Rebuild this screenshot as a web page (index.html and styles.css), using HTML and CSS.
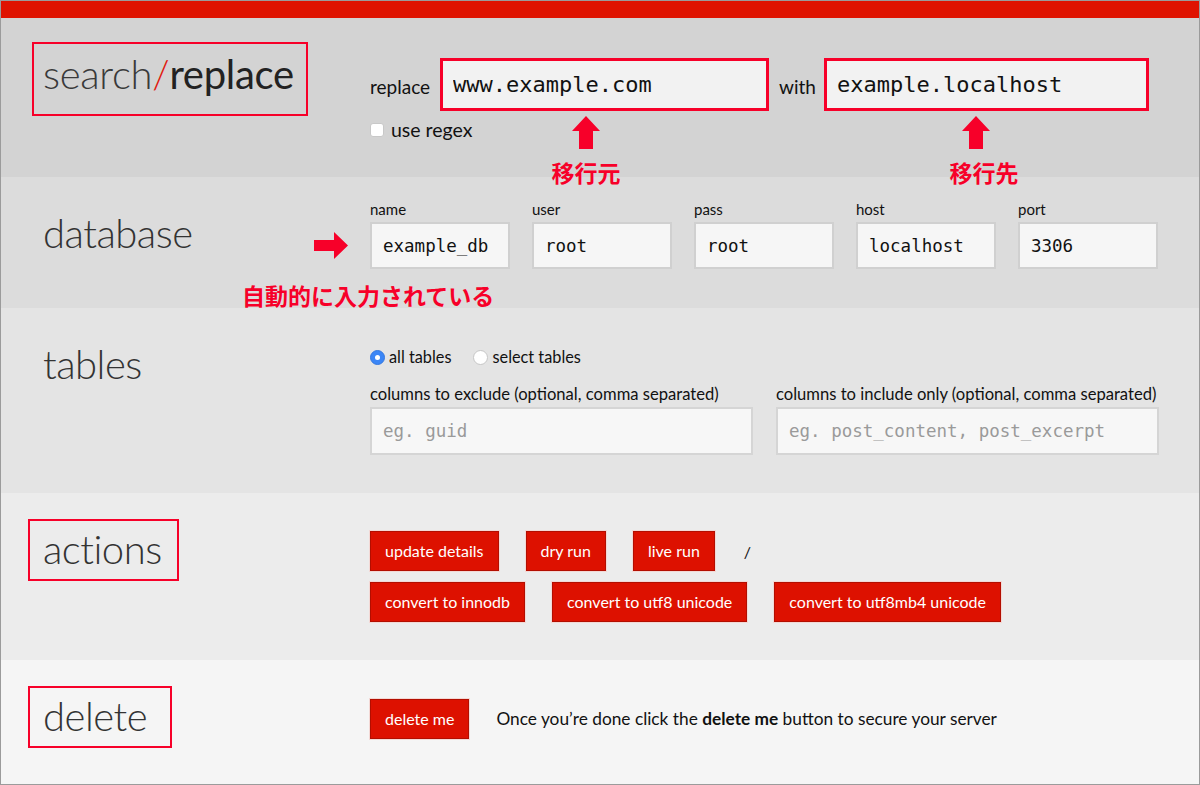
FILE: index.html
```html
<!DOCTYPE html>
<html lang="en">
<head>
<meta charset="utf-8">
<title>search/replace</title>
<link rel="stylesheet" href="styles.css">
</head>
<body>
<div class="frame">
  <div class="topbar"></div>

  <section class="sec sec-search">
    <div class="sec-head">
      <h1 class="heading boxed heading-search"><span class="h-light">search</span><span class="h-slash">/</span><span class="h-strong">replace</span></h1>
    </div>
    <div class="sec-body body-search">
      <div class="replace-row">
        <label class="lbl lbl-replace">replace</label>
        <input class="field-big" type="text" value="www.example.com">
        <label class="lbl lbl-with">with</label>
        <input class="field-big field-with" type="text" value="example.localhost">
      </div>
      <label class="check-row"><input class="check" type="checkbox"><span>use regex</span></label>
    </div>
    <div class="note note-from">
      <svg class="arrow-up" width="28" height="33" viewBox="0 0 28 33"><polygon points="14,0 28,15 21,15 21,33 7,33 7,15 0,15" fill="#f70029"/></svg>
      <span class="note-text">移行元</span>
    </div>
    <div class="note note-to">
      <svg class="arrow-up" width="28" height="33" viewBox="0 0 28 33"><polygon points="14,0 28,15 21,15 21,33 7,33 7,15 0,15" fill="#f70029"/></svg>
      <span class="note-text note-text-shift">移行先</span>
    </div>
  </section>

  <section class="sec sec-db">
    <div class="sec-head">
      <h2 class="heading">database</h2>
    </div>
    <div class="sec-body body-db">
      <div class="db-fields">
        <div class="db-field"><label class="small-lbl">name</label><input class="field-db" type="text" value="example_db"></div>
        <div class="db-field"><label class="small-lbl">user</label><input class="field-db" type="text" value="root"></div>
        <div class="db-field"><label class="small-lbl">pass</label><input class="field-db" type="text" value="root"></div>
        <div class="db-field"><label class="small-lbl">host</label><input class="field-db" type="text" value="localhost"></div>
        <div class="db-field"><label class="small-lbl">port</label><input class="field-db" type="text" value="3306"></div>
      </div>
    </div>
    <svg class="arrow-right" width="34" height="27" viewBox="0 0 34 27"><polygon points="0,8 20,8 20,0 34,13.5 20,27 20,19 0,19" fill="#f70029"/></svg>
    <div class="note-auto">自動的に入力されている</div>
  </section>

  <section class="sec sec-tables">
    <div class="sec-head">
      <h2 class="heading">tables</h2>
    </div>
    <div class="sec-body body-tables">
      <div class="radio-row">
        <label class="radio-opt"><input class="radio" type="radio" name="tables" checked><span>all tables</span></label>
        <label class="radio-opt"><input class="radio" type="radio" name="tables"><span>select tables</span></label>
      </div>
      <div class="col-row">
        <div class="col">
          <label class="col-lbl">columns to exclude (optional, comma separated)</label>
          <input class="field-col" type="text" placeholder="eg. guid">
        </div>
        <div class="col">
          <label class="col-lbl">columns to include only (optional, comma separated)</label>
          <input class="field-col" type="text" placeholder="eg. post_content, post_excerpt">
        </div>
      </div>
    </div>
  </section>

  <section class="sec sec-actions">
    <div class="sec-head">
      <h2 class="heading boxed">actions</h2>
    </div>
    <div class="sec-body body-actions">
      <div class="btn-row">
        <button class="btn">update details</button>
        <button class="btn">dry run</button>
        <button class="btn">live run</button>
        <span class="sep">/</span>
      </div>
      <div class="btn-row btn-row-2">
        <button class="btn">convert to innodb</button>
        <button class="btn">convert to utf8 unicode</button>
        <button class="btn">convert to utf8mb4 unicode</button>
      </div>
    </div>
  </section>

  <section class="sec sec-delete">
    <div class="sec-head">
      <h2 class="heading boxed heading-delete">delete</h2>
    </div>
    <div class="sec-body body-delete">
      <button class="btn">delete me</button>
      <p class="delete-text">Once you’re done click the <strong>delete me</strong> button to secure your server</p>
    </div>
  </section>
</div>
</body>
</html>
```

FILE: styles.css
```css
* { box-sizing: border-box; }

body {
  margin: 0;
  background: #ffffff;
  font-family: "Lato", "Noto Sans CJK JP", sans-serif;
  color: #111;
}

.frame {
  width: 1200px;
  height: 785px;
  border: 1px solid #9b9b9b;
  overflow: hidden;
  background: #f5f5f5;
}

.topbar {
  height: 17px;
  background: #df1300;
}

.sec {
  position: relative;
  display: flex;
}

.sec-search { height: 159px; background: #d3d3d3; }
.sec-db { height: 131px; background: #dcdcdc; }
.sec-tables { height: 185px; background: #e4e4e4; }
.sec-actions { height: 167px; background: #ececec; }
.sec-delete { height: 124px; background: #f5f5f5; }

.sec-head {
  width: 369px;
  flex: none;
}

.sec-body {
  flex: 1;
}

/* headings */
.heading {
  display: inline-block;
  margin: 26px 0 0 27px;
  padding: 4px 15px 6px 13px;
  border: 2px solid transparent;
  font-size: 40px;
  line-height: 48px;
  font-weight: 300;
  letter-spacing: -0.5px;
  color: #333;
  white-space: nowrap;
}

.boxed { border-color: #f70029; }

.heading-search {
  margin: 24px 0 0 31px;
  padding: 6px 12px 16px 9px;
  letter-spacing: -0.3px;
}

.heading-delete { padding-right: 23px; }

.h-light { font-weight: 300; color: #3a3a3a; }
.h-slash { font-weight: 300; color: #e01a10; }
.h-strong { font-weight: 400; color: #222; }

/* search / replace */
.body-search { padding-top: 40px; }

.replace-row {
  display: flex;
  align-items: center;
}

.lbl {
  font-size: 19px;
  line-height: 24px;
  padding-top: 4px;
  color: #111;
}

.lbl-replace { margin-right: 10px; }
.lbl-with { margin: 0 8px 0 10px; }

.field-big {
  width: 329px;
  height: 53px;
  border: 3px solid #f70029;
  background: #f2f2f2;
  font-family: "DejaVu Sans Mono", monospace;
  font-size: 22px;
  padding: 0 10px;
  color: #111;
  outline: none;
}

.field-with { width: 325px; }

.check-row {
  display: flex;
  align-items: center;
  gap: 7px;
  margin-top: 7px;
  font-size: 19.5px;
  line-height: 24px;
}

.check {
  appearance: none;
  -webkit-appearance: none;
  width: 14px;
  height: 14px;
  margin: 0;
  background: #fff;
  border: 1px solid #c8c8c8;
  border-radius: 3px;
}

/* annotations */
.note {
  position: absolute;
  z-index: 2;
  width: 100px;
  display: flex;
  flex-direction: column;
  align-items: center;
  top: 98px;
}

.note-from { left: 535px; }
.note-to { left: 925px; }

.arrow-up { display: block; }

.note-text {
  margin-top: 12px;
  font-family: "Noto Sans CJK JP", sans-serif;
  font-weight: 700;
  font-size: 23px;
  line-height: 23px;
  color: #f70029;
  white-space: nowrap;
}

.note-text-shift { margin-left: 16px; }

.arrow-right {
  position: absolute;
  z-index: 2;
  left: 313px;
  top: 55px;
}

.note-auto {
  position: absolute;
  z-index: 2;
  left: 241px;
  top: 107px;
  font-family: "Noto Sans CJK JP", sans-serif;
  font-weight: 700;
  font-size: 23px;
  line-height: 23px;
  color: #f70029;
  white-space: nowrap;
}

/* database */
.body-db { padding-top: 23px; }

.db-fields {
  display: flex;
  gap: 22px;
}

.db-field {
  display: flex;
  flex-direction: column;
  width: 140px;
}

.small-lbl {
  font-size: 15px;
  line-height: 18px;
  margin-bottom: 4px;
  color: #111;
}

.field-db {
  width: 140px;
  height: 47px;
  border: 2px solid #d0d0d0;
  background: #f6f6f6;
  font-family: "DejaVu Sans Mono", monospace;
  font-size: 17.5px;
  padding: 0 11px;
  color: #111;
  outline: none;
}

/* tables */
.body-tables { padding-top: 39px; }

.radio-row {
  display: flex;
  align-items: center;
  gap: 22px;
  font-size: 16.3px;
  line-height: 20px;
}

.radio-opt {
  display: flex;
  align-items: center;
  gap: 4px;
}

.radio {
  appearance: none;
  -webkit-appearance: none;
  width: 15px;
  height: 15px;
  margin: 0;
  border-radius: 50%;
  background: #fff;
  border: 1px solid #c6c6c6;
  position: relative;
}

.radio:checked {
  background: #3b86f6;
  border-color: #3478e0;
}

.radio:checked::after {
  content: "";
  position: absolute;
  left: 4px;
  top: 4px;
  width: 5px;
  height: 5px;
  border-radius: 50%;
  background: #fff;
}

.col-row {
  display: flex;
  gap: 23px;
  margin-top: 17px;
}

.col {
  display: flex;
  flex-direction: column;
  width: 383px;
}

.col-lbl {
  font-size: 16.6px;
  line-height: 20px;
  margin-bottom: 3px;
  white-space: nowrap;
}

.field-col {
  width: 383px;
  height: 48px;
  border: 2px solid #d5d5d5;
  background: #f7f7f7;
  font-family: "DejaVu Sans Mono", monospace;
  font-size: 17.5px;
  padding: 0 11px;
  outline: none;
}

.field-col::placeholder { color: #9a9a9a; }

/* actions */
.body-actions { padding-top: 38px; }

.btn-row {
  display: flex;
  align-items: center;
  gap: 27px;
}

.btn-row-2 { margin-top: 11px; }

.btn {
  height: 40px;
  padding: 0 14px;
  background: #dd1100;
  color: #fff;
  border: 1px solid #b30e00;
  box-shadow: 0 0 0 1px #f3d8d5;
  font-family: "Lato", sans-serif;
  font-size: 16px;
  line-height: 20px;
  cursor: pointer;
}

.sep {
  font-size: 16px;
  margin-left: 2px;
}

/* delete */
.body-delete {
  padding-top: 39px;
  display: flex;
  align-items: flex-start;
  gap: 27px;
}

.delete-text {
  margin: 0;
  font-size: 17.3px;
  line-height: 40px;
}

.delete-text strong { font-weight: 700; }
```
